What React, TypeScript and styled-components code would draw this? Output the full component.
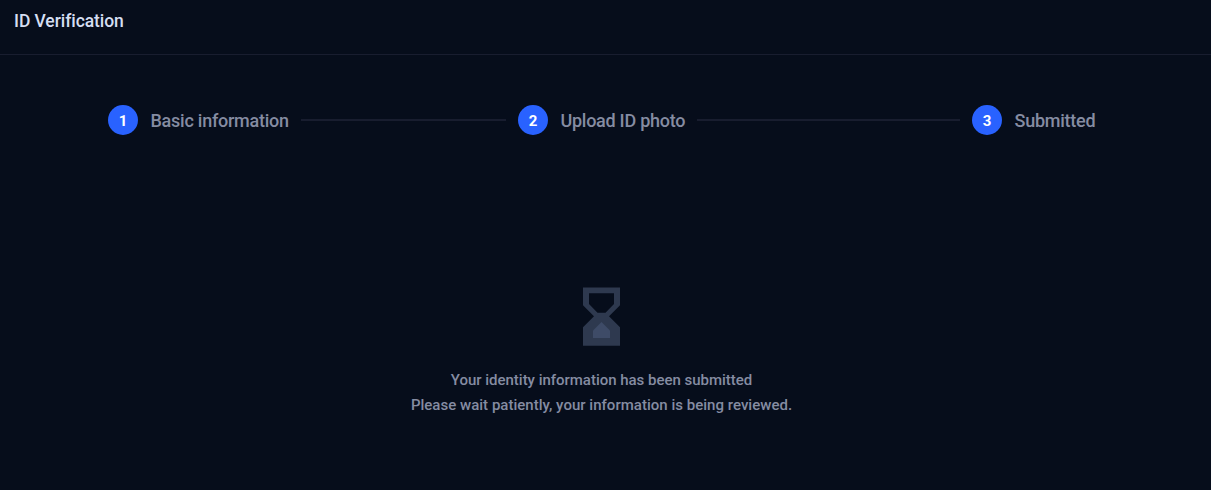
import React from 'react';
import styled, { createGlobalStyle } from 'styled-components';

const GlobalStyle = createGlobalStyle`
  * {
    box-sizing: border-box;
  }
  body {
    margin: 0;
    background-color: #060d1b;
    font-family: Roboto, 'Liberation Sans', sans-serif;
    font-weight: 500;
  }
`;

const Page = styled.main`
  height: 490px;
  overflow: hidden;
`;

const Header = styled.header`
  height: 55px;
  padding: 10px 14px 0;
  border-bottom: 1px solid #181d2f;
`;

const Title = styled.h1`
  margin: 0;
  color: #d5def2;
  font-size: 17.5px;
  font-weight: 500;
  line-height: 22px;
  letter-spacing: -0.07px;
  white-space: nowrap;
`;

const Steps = styled.ol`
  display: flex;
  margin: 50px 0 0;
  padding: 0 0 0 108px;
  list-style: none;
`;

const Step = styled.li<{ $width: number }>`
  display: flex;
  align-items: center;
  flex: none;
  width: ${({ $width }) => $width}px;
  height: 30px;
  padding-right: 12px;
`;

const StepNumber = styled.span`
  flex: none;
  width: 30px;
  height: 30px;
  border-radius: 50%;
  background-color: #2962ff;
  color: #fff;
  font-size: 15px;
  font-weight: 700;
  line-height: 32px;
  text-align: center;
`;

const StepLabel = styled.span<{ $spacing: number }>`
  margin: 2px 12px 0 12.5px;
  color: #858ca2;
  font-size: 18px;
  line-height: 24px;
  letter-spacing: ${({ $spacing }) => $spacing}px;
  white-space: nowrap;
`;

const StepLine = styled.span`
  flex: 1;
  height: 2px;
  background-color: #181d2f;
`;

const Result = styled.section`
  display: flex;
  flex-direction: column;
  align-items: center;
  margin-top: 152px;
  padding-right: 8px;
`;

const Message = styled.p<{ $spacing: number }>`
  margin: 0;
  color: #858ca2;
  font-size: 15px;
  line-height: 25px;
  letter-spacing: ${({ $spacing }) => $spacing}px;
  white-space: nowrap;
`;

const Messages = styled.div`
  margin-top: 22px;
  text-align: center;
`;

function Hourglass() {
  return (
    <svg width="37" height="59" viewBox="0 0 37 59">
      <path
        fill="#2e394f"
        fillRule="evenodd"
        d="M0 .4H37V18.2L26 29.2L37 40.2V58.7H0V40.2L11 29.2L0 18.2ZM6 6.3V17L14.5 25.7H22.5L31 17V6.3Z"
      />
      <path fill="#3e4b67" d="M18.5 35L27 43.5V51H10V43.5Z" />
    </svg>
  );
}

const steps = [
  { label: 'Basic information', width: 410, spacing: -0.25 },
  { label: 'Upload ID photo', width: 454, spacing: -0.27 },
  { label: 'Submitted', width: 140, spacing: -0.25 },
];

function App() {
  return (
    <Page>
      <GlobalStyle />
      <Header>
        <Title>ID Verification</Title>
      </Header>
      <Steps>
        {steps.map(({ label, width, spacing }, index) => (
          <Step key={label} $width={width}>
            <StepNumber>{index + 1}</StepNumber>
            <StepLabel $spacing={spacing}>{label}</StepLabel>
            {index < steps.length - 1 && <StepLine />}
          </Step>
        ))}
      </Steps>
      <Result>
        <Hourglass />
        <Messages>
          <Message $spacing={-0.02}>Your identity information has been submitted</Message>
          <Message $spacing={0.02}>Please wait patiently, your information is being reviewed.</Message>
        </Messages>
      </Result>
    </Page>
  );
}

export default App;
